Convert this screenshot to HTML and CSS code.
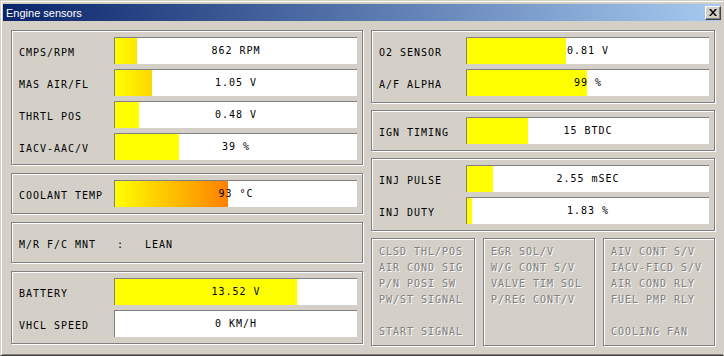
FILE: index.html
```html
<!DOCTYPE html>
<html lang="en">
<head>
  <meta charset="UTF-8" />
  <title>Engine sensors</title>
  <link rel="stylesheet" href="styles.css">
</head>
<body>

<div class="window">
  <div class="titlebar">
    <span class="title">Engine sensors</span>
    <button class="close" aria-label="Close">
      <svg width="8" height="7" viewBox="0 0 8 7"><path d="M0 0h2l2 2.4L6 0h2L5 3.5 8 7H6L4 4.6 2 7H0l3-3.5z" fill="#000"/></svg>
    </button>
  </div>

  <div class="panels">
    <div class="col">
      <div class="group rows first">
        <div class="row"><span class="label">CMPS/RPM</span><div class="bar"><div class="fill warm" style="width:22px"></div><span class="value">862 RPM</span></div></div>
        <div class="row"><span class="label">MAS AIR/FL</span><div class="bar"><div class="fill warm" style="width:37px"></div><span class="value">1.05 V</span></div></div>
        <div class="row"><span class="label">THRTL POS</span><div class="bar"><div class="fill" style="width:24px"></div><span class="value">0.48 V</span></div></div>
        <div class="row"><span class="label">IACV-AAC/V</span><div class="bar"><div class="fill" style="width:64px"></div><span class="value">39 %</span></div></div>
      </div>

      <div class="group rows">
        <div class="row"><span class="label">COOLANT TEMP</span><div class="bar"><div class="fill warm" style="width:113px"></div><span class="value">93 °C</span></div></div>
      </div>

      <div class="group rows">
        <div class="row"><span class="label wide">M/R F/C MNT   :   LEAN</span></div>
      </div>

      <div class="group rows">
        <div class="row"><span class="label">BATTERY</span><div class="bar"><div class="fill" style="width:182px"></div><span class="value">13.52 V</span></div></div>
        <div class="row"><span class="label">VHCL SPEED</span><div class="bar"><span class="value">0 KM/H</span></div></div>
      </div>
    </div>

    <div class="col col-right">
      <div class="group rows">
        <div class="row"><span class="label">O2 SENSOR</span><div class="bar"><div class="fill" style="width:99px"></div><span class="value">0.81 V</span></div></div>
        <div class="row"><span class="label">A/F ALPHA</span><div class="bar"><div class="fill" style="width:120px"></div><span class="value">99 %</span></div></div>
      </div>

      <div class="group rows">
        <div class="row"><span class="label">IGN TIMING</span><div class="bar"><div class="fill" style="width:61px"></div><span class="value">15 BTDC</span></div></div>
      </div>

      <div class="group rows">
        <div class="row"><span class="label">INJ PULSE</span><div class="bar"><div class="fill" style="width:26px"></div><span class="value">2.55 mSEC</span></div></div>
        <div class="row"><span class="label">INJ DUTY</span><div class="bar"><div class="fill" style="width:5px"></div><span class="value">1.83 %</span></div></div>
      </div>

      <div class="switches">
        <div class="group list">
          <div>CLSD THL/POS</div>
          <div>AIR COND SIG</div>
          <div>P/N POSI SW</div>
          <div>PW/ST SIGNAL</div>
          <div class="blank"></div>
          <div>START SIGNAL</div>
        </div>
        <div class="group list">
          <div>EGR SOL/V</div>
          <div>W/G CONT S/V</div>
          <div>VALVE TIM SOL</div>
          <div>P/REG CONT/V</div>
        </div>
        <div class="group list">
          <div>AIV CONT S/V</div>
          <div>IACV-FICD S/V</div>
          <div>AIR COND RLY</div>
          <div>FUEL PMP RLY</div>
          <div class="blank"></div>
          <div>COOLING FAN</div>
        </div>
      </div>
    </div>
  </div>
</div>

</body>
</html>
```

FILE: styles.css
```css
body {
  margin: 0;
  background-color: #d4d0c8;
  font-family: "DejaVu Sans Mono", monospace;
  font-size: 10px;
  letter-spacing: 0.98px;
  color: #000;
}

.window {
  width: 724px;
  height: 356px;
  box-sizing: border-box;
  overflow: hidden;
  background-color: #d4d0c8;
  border: 1px solid #d4d0c8;
  border-bottom-color: #404040;
  box-shadow: inset 1px 1px #fff, inset 0 -1px #808080;
  padding: 3px 2px 2px 2px;
}

.titlebar {
  height: 17px;
  display: flex;
  align-items: center;
  justify-content: space-between;
  padding-left: 3px;
  background: linear-gradient(90deg, #0a246a, #a6caf0);
  color: #fff;
  font-family: "Liberation Sans", Arial, sans-serif;
  font-size: 11px;
  letter-spacing: 0;
}

.close {
  width: 16px;
  height: 14px;
  padding: 0;
  display: flex;
  align-items: center;
  justify-content: center;
  background-color: #d4d0c8;
  border: 1px solid #fff;
  border-right-color: #404040;
  border-bottom-color: #404040;
  box-shadow: inset -1px -1px #808080;
}

.panels {
  display: grid;
  grid-template-columns: 352px 344px;
  column-gap: 8px;
  padding: 9px 0 0 8px;
  height: 314px;
}

.col {
  display: flex;
  flex-direction: column;
  gap: 8px;
}

.col-right {
  gap: 7px;
}

.group {
  border: 1px solid #808080;
  box-shadow: inset 1px 1px #fff, 1px 1px #fff;
}

.rows {
  display: flex;
  flex-direction: column;
  gap: 5px;
  padding: 6px 5px 6px 7px;
}

.rows.first {
  padding-bottom: 4px;
}

.row {
  display: flex;
  height: 27px;
}

.label {
  width: 95px;
  flex: none;
  line-height: 27px;
  padding-top: 2px;
  white-space: pre;
}

.col-right .label {
  width: 87px;
}

.label.wide {
  width: auto;
}

.bar {
  flex: 1;
  position: relative;
  background-color: #fff;
  border-top: 1px solid #808080;
  border-left: 1px solid #808080;
  text-align: center;
  line-height: 26px;
  white-space: pre;
}

.fill {
  position: absolute;
  left: 0;
  top: 0;
  bottom: 0;
  background-color: #ffff00;
}

.fill.warm {
  background: linear-gradient(90deg, #ffff00 0, #ff8000 113px);
}

.value {
  position: relative;
}

.switches {
  flex: 1;
  display: grid;
  grid-template-columns: 104px 112px 112px;
  column-gap: 8px;
}

.list {
  padding: 5px 7px;
  line-height: 16px;
  color: #808080;
  text-shadow: 1px 1px 0 #fff;
  white-space: nowrap;
}

.list .blank {
  height: 16px;
}
```
